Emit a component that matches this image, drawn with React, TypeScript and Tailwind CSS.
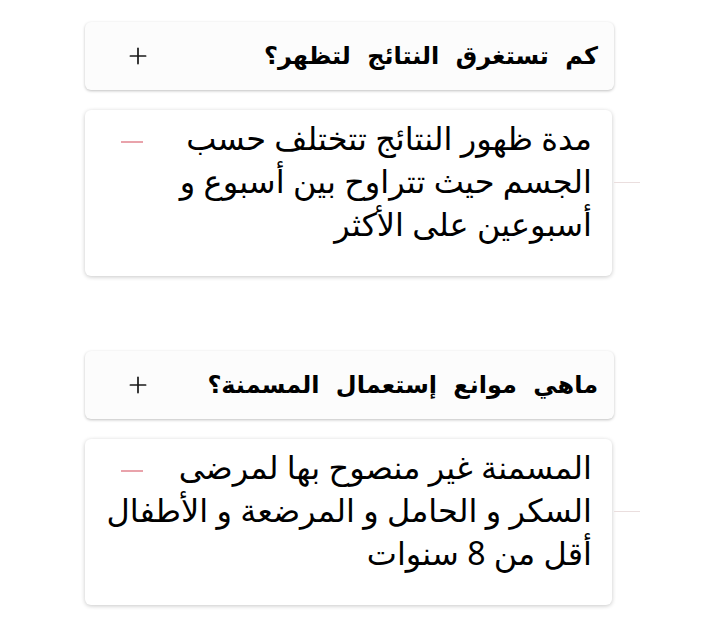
import { Plus } from "lucide-react"

const faqs = [
  {
    q: "كم تستغرق النتائج لتظهر؟",
    a: ["مدة ظهور النتائج تتختلف حسب", "الجسم حيث تتراوح بين أسبوع و", "أسبوعين على الأكثر"],
  },
  {
    q: "ماهي موانع إستعمال المسمنة؟",
    a: ["المسمنة غير منصوح بها لمرضى", "السكر و الحامل و المرضعة و الأطفال", "أقل من 8 سنوات"],
  },
]

function Item({ q, a, first }: { q: string; a: string[]; first?: boolean }) {
  return (
    <div className={first ? "mt-[22px]" : "mt-[75px]"}>
      <div className="flex h-[68px] items-center justify-between rounded-md bg-[#fcfcfc] pr-[16px] pl-[40px] shadow-[0_1px_3px_rgba(0,0,0,0.25)]">
        <h3
          className="text-[24px] font-bold tracking-[0.5px] [word-spacing:8px] text-black"
          style={{ fontFamily: '"DejaVu Sans", sans-serif' }}
        >
          {q}
        </h3>
        <Plus className="h-[26px] w-[26px] text-[#1a1a1a]" strokeWidth={1.6} />
      </div>
      <div className="relative mt-[20px] mr-[2px] min-h-[166px] rounded-md bg-white pt-[6px] pr-[20px] pb-[20px] pl-[20px] shadow-[0_1px_4px_rgba(0,0,0,0.22)]">
        <p
          className="text-[32px] leading-[43px] whitespace-nowrap text-black"
          style={{ fontFamily: '"Noto Sans", "DejaVu Sans", sans-serif' }}
        >
          {a.map((l, i) => (
            <span key={i} className="block">
              {l}
            </span>
          ))}
        </p>
        <span className="absolute top-[31px] left-[36px] h-[2px] w-[22px] bg-[#e9a3ab]" />
        <span className="absolute top-[72px] -right-[28px] h-px w-[26px] bg-[#eadede]" />
      </div>
    </div>
  )
}

export default function App() {
  return (
    <div dir="rtl" className="min-h-[626px] w-[720px] overflow-hidden bg-white">
      <div className="mr-[106px] ml-[85px] flex flex-col">
        {faqs.map((f, i) => (
          <Item key={i} q={f.q} a={f.a} first={i === 0} />
        ))}
      </div>
    </div>
  )
}
